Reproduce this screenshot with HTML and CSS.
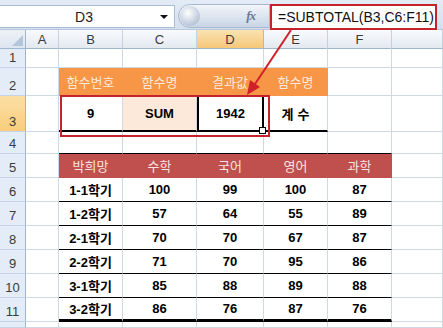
FILE: index.html
```html
<!DOCTYPE html>
<html>
<head>
  <title>SUBTOTAL</title>
  <link rel="stylesheet" href="styles.css">
</head>
<body>
  <div class="toolbar">
    <div class="namebox">
      <span class="name">D3</span>
      <span class="drop"></span>
    </div>
    <div class="fxbar">
      <span class="knob"></span>
      <span class="fx">fx</span>
    </div>
    <div class="formula">=SUBTOTAL(B3,C6:F11)</div>
  </div>

  <div class="sheet" id="sheet"></div>

  <div class="mark"></div>
  <svg class="arrow" width="443" height="328">
    <line x1="291" y1="30" x2="255" y2="84" stroke="#d0202a" stroke-width="2"/>
    <polygon points="247,95 260,87 250,80" fill="#d0202a"/>
  </svg>

  <script>
    const sheet = document.getElementById('sheet');
    const cols = ['A', 'B', 'C', 'D', 'E', 'F', ''];

    // rows: [number, [A..G values], row class]
    const rows = [
      [1, [], ''],
      [2, ['', '함수번호', '함수명', '결과값', '함수명'], 'r-orange'],
      [3, ['', '9', 'SUM', '1942', '계수'], 'r-result'],
      [4, [], 'r-gap'],
      [5, ['', '박희망', '수학', '국어', '영어', '과학'], 'r-red'],
      [6, ['', '1-1학기', '100', '99', '100', '87'], 'r-data'],
      [7, ['', '1-2학기', '57', '64', '55', '89'], 'r-data'],
      [8, ['', '2-1학기', '70', '70', '67', '87'], 'r-data'],
      [9, ['', '2-2학기', '71', '70', '95', '86'], 'r-data'],
      [10, ['', '3-1학기', '85', '88', '89', '88'], 'r-data'],
      [11, ['', '3-2학기', '86', '76', '87', '76'], 'r-data r-last'],
      ['', [], '']
    ];

    function cell(cls, text) {
      const div = document.createElement('div');
      div.className = cls;
      div.textContent = text || '';
      sheet.appendChild(div);
      return div;
    }

    // column header row
    cell('corner', '');
    cols.forEach(c => cell('colhead' + (c === 'D' ? ' sel' : ''), c));

    rows.forEach(([num, vals, rowCls]) => {
      cell('rowhead' + (num === 3 ? ' sel' : ''), num);
      cols.forEach((c, i) => {
        let cls = 'cell';
        if (rowCls && i >= 1 && i <= (rowCls === 'r-orange' || rowCls === 'r-result' ? 4 : 5)) {
          cls += ' ' + rowCls + ' col-' + c;
        }
        const div = cell(cls, vals[i]);
        if (num === 3 && c === 'D') {
          div.classList.add('active');
          const handle = document.createElement('span');
          handle.className = 'handle';
          div.appendChild(handle);
        }
      });
    });
  </script>
</body>
</html>
```

FILE: styles.css
```css
/* sheet styles */
body {
  margin: 0;
  width: 443px;
  height: 328px;
  overflow: hidden;
  position: relative;
  background-color: #fff;
  font-family: "Liberation Sans", Arial, "Noto Sans CJK KR", sans-serif;
}

.toolbar {
  display: flex;
  height: 30px;
  background: linear-gradient(#e3ebf6, #d5e0ef);
  box-sizing: border-box;
  border-bottom: 1px solid #b7c8de;
}

.namebox {
  width: 175px;
  height: 23px;
  margin-top: 5px;
  background-color: #fff;
  border: 1px solid #a9bdd6;
  border-left: none;
  box-sizing: border-box;
  display: flex;
  align-items: center;
}

.namebox .name {
  flex: 1;
  text-align: center;
  font-size: 14px;
  color: #222;
  padding-left: 8px;
}

.namebox .drop {
  width: 0;
  height: 0;
  border-left: 4px solid transparent;
  border-right: 4px solid transparent;
  border-top: 4px solid #111;
  margin-right: 6px;
}

.fxbar {
  width: 92px;
  height: 24px;
  margin-top: 4px;
  margin-left: 3px;
  background: linear-gradient(#f2f5fa, #c9d5e6);
  border: 1px solid #a7b9d1;
  border-radius: 12px 0 0 12px;
  box-sizing: border-box;
  display: flex;
  align-items: center;
  justify-content: space-between;
}

.fxbar .knob {
  width: 20px;
  height: 20px;
  margin-left: 1px;
  border-radius: 50%;
  background: radial-gradient(circle at 40% 35%, #ffffff, #b9c6d8 70%, #9fb0c7);
}

.fxbar .fx {
  font-family: "Liberation Serif", serif;
  font-style: italic;
  font-weight: bold;
  font-size: 13px;
  letter-spacing: -1px;
  color: #6b7a91;
  margin-right: 14px;
}

.formula {
  flex: 1;
  height: 26px;
  margin-top: 4px;
  margin-right: 6px;
  border: 2px solid #c4232b;
  box-sizing: border-box;
  background-color: #fff;
  font-size: 14px;
  line-height: 22px;
  padding-left: 6px;
  color: #111;
}

.sheet {
  display: grid;
  grid-template-columns: 26px 33px 64px 74px 67px 64px 64px 1fr;
  grid-template-rows: 19px 19px 28px 36px 22px 24px repeat(6, 24px) 1fr;
  height: 298px;
}

.sheet > div {
  box-sizing: border-box;
  display: flex;
  align-items: center;
  justify-content: center;
  overflow: hidden;
}

.corner {
  background: linear-gradient(#eef2f7, #dde5ef);
  border-right: 1px solid #9eb6ce;
  border-bottom: 1px solid #9eb6ce;
  position: relative;
}

.corner::after {
  content: "";
  position: absolute;
  right: 2px;
  bottom: 2px;
  border-left: 11px solid transparent;
  border-bottom: 11px solid #b6c6da;
}

.colhead {
  background: linear-gradient(#f9fafc, #e4e9f0);
  border-right: 1px solid #c5d1df;
  border-bottom: 1px solid #9eb6ce;
  font-size: 13px;
  color: #3a3a3a;
}

.colhead.sel {
  background: linear-gradient(#fae2b2, #f5c879);
  border-right-color: #d7b27a;
}

.rowhead {
  background-color: #e4ecf7;
  border-right: 1px solid #9eb6ce;
  border-bottom: 1px solid #c5d3e4;
  font-size: 13px;
  color: #3a3a3a;
  align-items: flex-end !important;
  padding-bottom: 2px;
}

.rowhead.sel {
  background: linear-gradient(#fcdfa5, #f8cd7c);
}

.cell {
  border-right: 1px solid #d0d7e5;
  border-bottom: 1px solid #d0d7e5;
  font-size: 12px;
  font-weight: bold;
  color: #000;
}

.r-orange {
  background-color: #f79646;
  border-right-color: #f79646;
  border-bottom-color: #f79646;
  font-family: "Noto Sans CJK KR", sans-serif;
  font-weight: normal;
  font-size: 13px;
  color: #fde9d9;
}

.r-result {
  border-bottom: 2px solid #000;
  font-size: 13px;
}

.r-result.col-C {
  background-color: #fde9d9;
}

.r-result.col-E {
  letter-spacing: 4px;
  padding-left: 4px;
}

.active {
  border-left: 2px solid #000;
  border-right: 2px solid #000;
  border-top: 1px solid #000;
  position: relative;
  overflow: visible !important;
}

.handle {
  position: absolute;
  right: -4px;
  bottom: -4px;
  width: 5px;
  height: 5px;
  background-color: #fff;
  border: 1px solid #000;
  z-index: 2;
}

.r-gap {
  border-bottom-color: #000;
}

.r-red {
  background-color: #c0504d;
  border-right-color: #c0504d;
  border-bottom-color: #c0504d;
  font-family: "Noto Sans CJK KR", sans-serif;
  font-weight: normal;
  font-size: 13px;
  color: #f7e4e3;
}

.r-data {
  border-bottom: 1px solid #000;
  font-size: 13px;
}

.r-last {
  border-bottom: 3px solid #000;
}

.mark {
  position: absolute;
  left: 60px;
  top: 95px;
  width: 210px;
  height: 42px;
  box-sizing: border-box;
  border: 2px solid #c4232b;
  pointer-events: none;
}

.arrow {
  position: absolute;
  left: 0;
  top: 0;
  pointer-events: none;
}
```
